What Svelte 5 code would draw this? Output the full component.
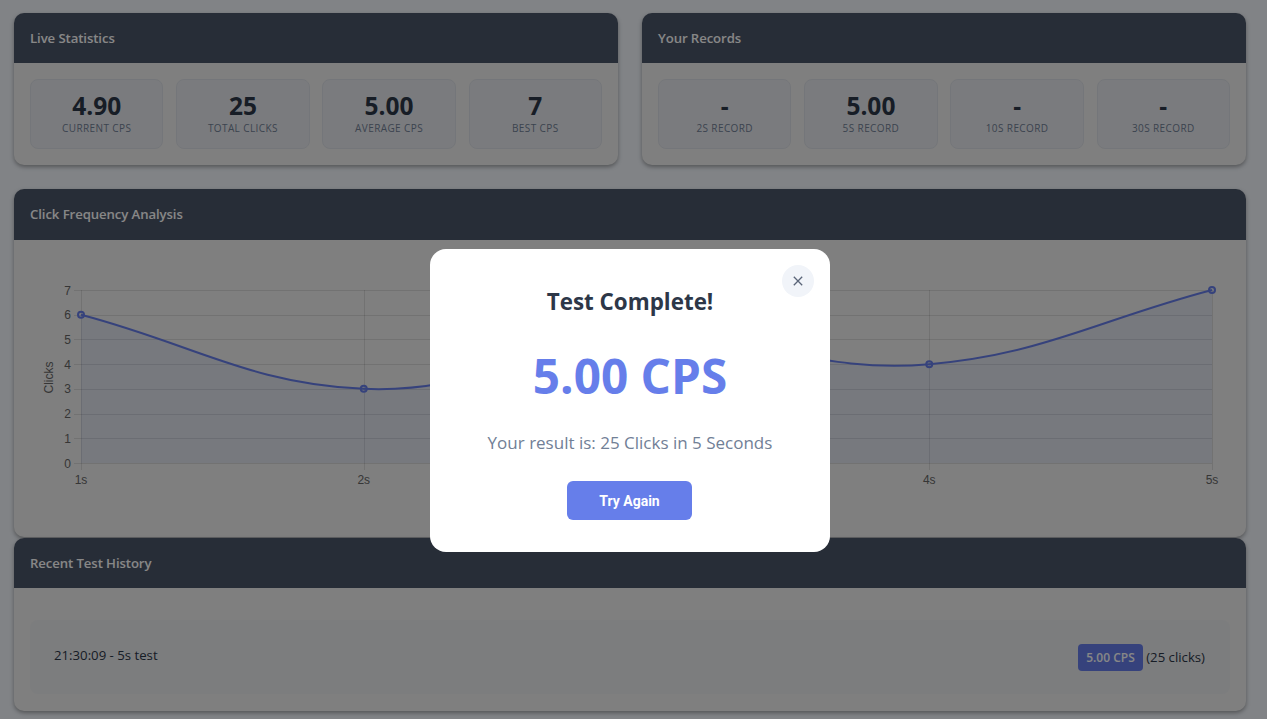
<script>
  const live = [
    { v: '4.90', l: 'Current CPS' },
    { v: '25', l: 'Total Clicks' },
    { v: '5.00', l: 'Average CPS' },
    { v: '7', l: 'Best CPS' }
  ];
  const records = [
    { v: '-', l: '2s Record' },
    { v: '5.00', l: '5s Record' },
    { v: '-', l: '10s Record' },
    { v: '-', l: '30s Record' }
  ];
  const W = 1232, H = 223, x0 = 67, x1 = 1198, yTop = 50, yBot = 223;
  const data = [6, 3, 5, 4, 7];
  const X = (i) => x0 + (i * (x1 - x0)) / 4;
  const Y = (v) => yBot - (v * (yBot - yTop)) / 7;
  const pts = data.map((v, i) => [X(i), Y(v)]);
  function ctrl(p, c, n) {
    const d1 = Math.hypot(c[0] - p[0], c[1] - p[1]);
    const d2 = Math.hypot(n[0] - c[0], n[1] - c[1]);
    const s1 = d1 + d2 ? d1 / (d1 + d2) : 0;
    const s2 = d1 + d2 ? d2 / (d1 + d2) : 0;
    return {
      a: [c[0] - 0.4 * s1 * (n[0] - p[0]), c[1] - 0.4 * s1 * (n[1] - p[1])],
      b: [c[0] + 0.4 * s2 * (n[0] - p[0]), c[1] + 0.4 * s2 * (n[1] - p[1])]
    };
  }
  const cs = pts.map((c, i) => ctrl(pts[Math.max(i - 1, 0)], c, pts[Math.min(i + 1, 4)]));
  let line = `M${pts[0][0]} ${pts[0][1]}`;
  for (let i = 1; i < 5; i++) {
    line += ` C${cs[i - 1].b[0]} ${cs[i - 1].b[1]} ${cs[i].a[0]} ${cs[i].a[1]} ${pts[i][0]} ${pts[i][1]}`;
  }
  const area = `${line} L${x1} ${yBot} L${x0} ${yBot} Z`;
  const ys = [7, 6, 5, 4, 3, 2, 1, 0];
  const xs = ['1s', '2s', '3s', '4s', '5s'];
</script>

<div class="page">
  <div class="row">
    <section class="card">
      <h2 class="head">Live Statistics</h2>
      <div class="stats">
        {#each live as s}
          <div class="stat"><div class="val">{s.v}</div><div class="lab">{s.l}</div></div>
        {/each}
      </div>
    </section>
    <section class="card">
      <h2 class="head">Your Records</h2>
      <div class="stats">
        {#each records as s}
          <div class="stat"><div class="val">{s.v}</div><div class="lab">{s.l}</div></div>
        {/each}
      </div>
    </section>
  </div>

  <section class="card chartcard">
    <h2 class="head tall">Click Frequency Analysis</h2>
    <svg class="chart" width={W} height={H + 50} viewBox="0 0 {W} {H + 50}">
      {#each ys as v}
        <line x1={x0 - 7} x2={x1} y1={Math.round(Y(v)) + 0.5} y2={Math.round(Y(v)) + 0.5} class="grid" />
        <text x={x0 - 10} y={Y(v) + 4.5} text-anchor="end" class="tick">{v}</text>
      {/each}
      {#each xs as t, i}
        <line x1={Math.round(X(i)) + 0.5} x2={Math.round(X(i)) + 0.5} y1={yTop} y2={yBot + 7} class="grid" />
        <text x={X(i)} y={yBot + 21} text-anchor="middle" class="tick">{t}</text>
      {/each}
      <text transform="translate(39 137.5) rotate(-90)" text-anchor="middle" class="tick">Clicks</text>
      <path d={area} class="fill" />
      <path d={line} class="curve" />
      {#each pts as p}
        <circle cx={p[0]} cy={p[1]} r="3" class="pt" />
      {/each}
    </svg>
  </section>

  <section class="card histcard">
    <h2 class="head">Recent Test History</h2>
    <div class="histbody">
      <div class="item">
        <span>21:30:09 - 5s test</span>
        <span class="res"><span class="badge">5.00 CPS</span> (25 clicks)</span>
      </div>
    </div>
  </section>
</div>

<div class="overlay">
  <div class="modal">
    <button class="close" aria-label="Close">
      <svg width="10" height="10" viewBox="0 0 10 10"><path d="M0.8 0.8L9.2 9.2M9.2 0.8L0.8 9.2" /></svg>
    </button>
    <h3>Test Complete!</h3>
    <div class="big">5.00 CPS</div>
    <p>Your result is: 25 Clicks in 5 Seconds</p>
    <button class="again">Try Again</button>
  </div>
</div>

<style>
  :global(body) {
    margin: 0;
    background: #f3f7fd;
    font-family: "Open Sans", "Noto Sans", sans-serif;
    overflow: hidden;
  }
  .page {
    width: 1232px;
    padding: 13px 21px 0 14px;
    height: 706px;
    overflow: hidden;
  }
  .row {
    display: grid;
    grid-template-columns: 604px 604px;
    gap: 24px;
    margin-bottom: 24px;
  }
  .card {
    background: #f0f0f0;
    border-radius: 10px;
    box-shadow: 0 2px 4px rgba(0, 0, 0, 0.35);
    overflow: hidden;
  }
  .head {
    margin: 0;
    height: 50px;
    box-sizing: border-box;
    padding: 0 16px 1px;
    display: flex;
    align-items: center;
    background: #4a5568;
    color: #fff;
    font-size: 13.2px;
    font-weight: 600;
    letter-spacing: -0.1px;
  }
  .tall { height: 51px; padding-bottom: 2px; }
  .stats {
    display: grid;
    grid-template-columns: repeat(4, 1fr);
    gap: 12.8px;
    padding: 16px;
  }
  .stat {
    height: 70px;
    box-sizing: border-box;
    border: 1px solid #dcdfe6;
    border-radius: 8px;
    background: #e7e9ee;
    text-align: center;
    padding-top: 11px;
  }
  .val {
    font-size: 24.5px;
    line-height: 30px;
    font-weight: 700;
    color: #2d3748;
  }
  .lab {
    font-size: 10px;
    line-height: 14px;
    margin-top: 0;
    text-transform: uppercase;
    letter-spacing: 0.4px;
    color: #718096;
    font-weight: 400;
  }
  .chartcard { height: 348px; margin-bottom: 1px; }
  .chart { display: block; }
  .grid { stroke: rgba(0, 0, 0, 0.1); stroke-width: 1; }
  .tick { font: 12px "Liberation Sans", Arial, sans-serif; fill: #666; }
  .fill { fill: rgba(102, 126, 234, 0.1); }
  .curve { fill: none; stroke: #667eea; stroke-width: 2; }
  .pt { fill: rgba(102, 126, 234, 0.1); stroke: #667eea; stroke-width: 2; }
  .histcard { height: 173px; }
  .histbody { padding: 32px 16px 17px; }
  .item {
    height: 74px;
    box-sizing: border-box;
    padding: 25px 24px 24px;
    display: flex;
    justify-content: space-between;
    align-items: flex-start;
    background: #ebecef;
    border-radius: 8px;
    font-size: 13.2px;
    line-height: 21px;
    color: #2d3748;
  }
  .res { display: inline-block; line-height: 27px; margin: -1px 1px 0 0; }
  .badge {
    display: inline-block;
    background: #667eea;
    color: #fff;
    font-size: 12px;
    font-weight: 600;
    padding: 0 8px;
    height: 27px;
    line-height: 27px;
    border-radius: 4px;
    vertical-align: top;
  }
  .overlay {
    position: fixed;
    inset: 0;
    background: rgba(0, 0, 0, 0.47);
  }
  .modal {
    position: absolute;
    left: 430px;
    top: 249px;
    width: 400px;
    height: 303px;
    box-sizing: border-box;
    background: #fff;
    border-radius: 16px;
    text-align: center;
    padding-top: 36px;
  }
  .close {
    position: absolute;
    top: 16px;
    right: 16px;
    width: 32px;
    height: 32px;
    border: none;
    border-radius: 50%;
    background: #f1f4f9;
    padding: 0;
    display: flex;
    align-items: center;
    justify-content: center;
  }
  .close path { stroke: #5a6578; stroke-width: 1.3; fill: none; }
  h3 {
    margin: 0;
    font-size: 22.4px;
    line-height: 34px;
    font-weight: 700;
    color: #2d3748;
  }
  .big {
    margin-top: 27px;
    font-size: 47.7px;
    line-height: 60px;
    font-weight: 700;
    color: #667eea;
  }
  p {
    margin: 24px 0 0;
    font-size: 17px;
    line-height: 26px;
    color: #718096;
  }
  .again {
    margin: 25px 1px 0 0;
    width: 125px;
    height: 39px;
    border: none;
    border-radius: 6px;
    background: #667eea;
    color: #fff;
    font: 700 14px Roboto, sans-serif;
  }
</style>
